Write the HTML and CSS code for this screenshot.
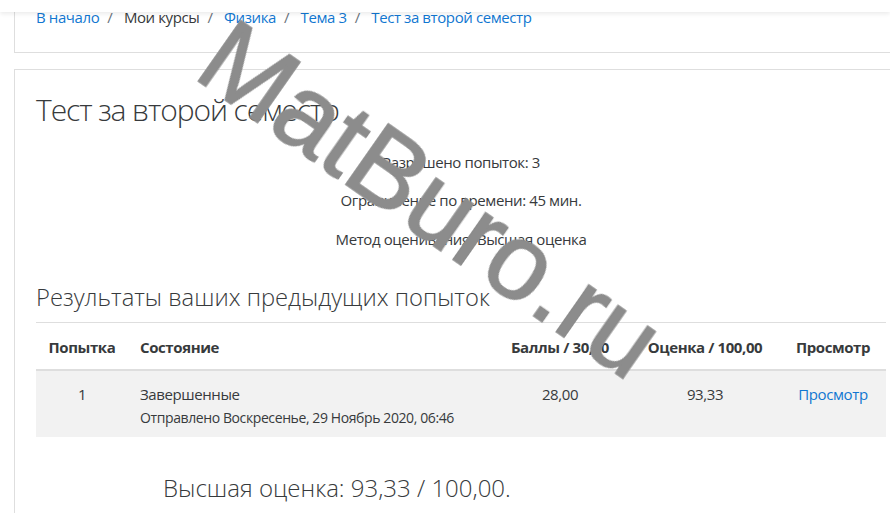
FILE: index.html
```html
<!DOCTYPE html>
<html lang="ru">
<head>
<meta charset="UTF-8">
<meta name="viewport" content="width=device-width, initial-scale=1.0">
<title>Тест за второй семестр</title>
<link rel="stylesheet" href="styles.css">
</head>
<body>
<div class="navbar"></div>

<div class="page">
  <header class="card page-header">
    <nav class="breadcrumb">
      <a href="#">В начало</a><span class="sep">/</span>
      <span>Мои курсы</span><span class="sep">/</span>
      <a href="#">Физика</a><span class="sep">/</span>
      <a href="#">Тема 3</a><span class="sep">/</span>
      <a href="#">Тест за второй семестр</a>
    </nav>
  </header>

  <section class="card main">
    <h2>Тест за второй семестр</h2>
    <div class="quizinfo">
      <p>Разрешено попыток: 3</p>
      <p>Ограничение по времени: 45 мин.</p>
      <p>Метод оценивания: Высшая оценка</p>
    </div>

    <h3>Результаты ваших предыдущих попыток</h3>
    <table class="attempts">
      <colgroup>
        <col class="c-num">
        <col class="c-state">
        <col class="c-marks">
        <col class="c-grade">
        <col class="c-review">
      </colgroup>
      <thead>
        <tr>
          <th class="center">Попытка</th>
          <th>Состояние</th>
          <th class="center">Баллы / 30,00</th>
          <th class="center">Оценка / 100,00</th>
          <th class="center">Просмотр</th>
        </tr>
      </thead>
      <tbody>
        <tr>
          <td class="center">1</td>
          <td>Завершенные<span class="submitted">Отправлено Воскресенье, 29 Ноябрь 2020, 06:46</span></td>
          <td class="center">28,00</td>
          <td class="center">93,33</td>
          <td class="center"><a href="#">Просмотр</a></td>
        </tr>
      </tbody>
    </table>

    <h3 class="feedback">Высшая оценка: 93,33 / 100,00.</h3>
  </section>
</div>

<div class="watermark">MatBuro.ru</div>
</body>
</html>
```

FILE: styles.css
```css
body {
  margin: 0;
  background-color: #fff;
  color: #373a3c;
  font-family: "Open Sans", sans-serif;
  font-size: 15px;
  line-height: 1.5;
  letter-spacing: -0.4px;
  overflow: hidden;
}

a {
  color: #1177d1;
  text-decoration: none;
}

.navbar {
  position: fixed;
  top: 0;
  left: 0;
  right: 0;
  height: 12px;
  background-color: #fff;
  box-shadow: 0 2px 4px rgba(0, 0, 0, 0.08);
  z-index: 2;
}

.page {
  padding-left: 14px;
  width: 900px;
}

.card {
  border: 1px solid #dedede;
  background-color: #fff;
}

.page-header {
  margin-top: -16px;
  padding: 21px 21px 23px;
}

.breadcrumb .sep {
  color: #6a737b;
  padding: 0 8px;
}

.main {
  margin-top: 16px;
  padding: 22px 21px 20px;
  width: 850px;
}

h2 {
  margin: 0 0 23px;
  font-size: 30px;
  font-weight: 300;
  line-height: 1.2;
  letter-spacing: -1.1px;
}

h3 {
  margin: 0 0 10px;
  font-size: 23.75px;
  font-weight: 300;
  line-height: 1.2;
  letter-spacing: 0;
}

.quizinfo {
  text-align: center;
  margin-bottom: 33px;
}

.quizinfo p {
  margin: 0 0 16px;
}

.attempts {
  width: 850px;
  border-collapse: collapse;
  table-layout: fixed;
}

.c-num { width: 92px; }
.c-state { width: 362px; }
.c-marks { width: 140px; }
.c-grade { width: 150px; }
.c-review { width: 106px; }

.attempts th,
.attempts td {
  padding: 12px;
  text-align: left;
  vertical-align: top;
}

.attempts th {
  padding-top: 13px;
  padding-bottom: 11px;
  border-top: 1px solid #dedede;
  border-bottom: 2px solid #dedede;
  font-weight: 700;
}

.attempts td {
  padding-bottom: 10px;
}

.attempts .center {
  text-align: center;
}

.attempts tbody tr {
  background-color: #f2f2f2;
}

.submitted {
  display: block;
  margin-top: 2px;
  font-size: 14px;
  line-height: 19.5px;
}

.feedback {
  margin: 37px 0 0 127px;
  font-size: 24px;
}

.watermark {
  position: absolute;
  left: 194px;
  top: -14px;
  font-family: "Liberation Sans", sans-serif;
  font-size: 108px;
  line-height: 1;
  letter-spacing: 0;
  color: #8c8c8c;
  -webkit-text-stroke: 1.5px #8c8c8c;
  transform-origin: 0 86px;
  transform: rotate(35deg);
  z-index: 3;
  white-space: nowrap;
}
```
